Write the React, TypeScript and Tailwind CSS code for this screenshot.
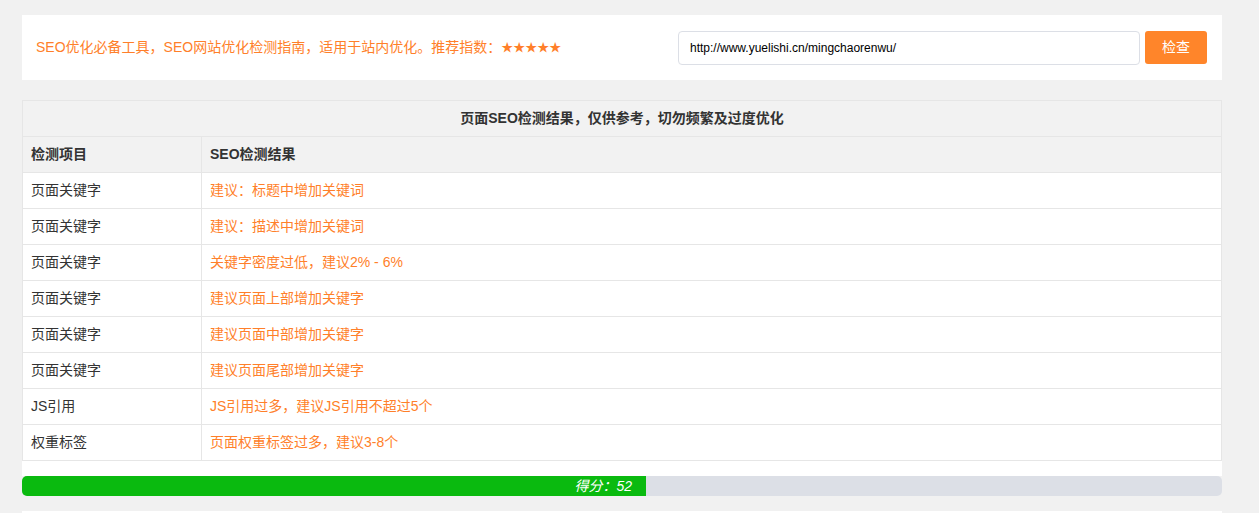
import React from "react";

const rows: [string, string][] = [
  ["页面关键字", "建议：标题中增加关键词"],
  ["页面关键字", "建议：描述中增加关键词"],
  ["页面关键字", "关键字密度过低，建议2% - 6%"],
  ["页面关键字", "建议页面上部增加关键字"],
  ["页面关键字", "建议页面中部增加关键字"],
  ["页面关键字", "建议页面尾部增加关键字"],
  ["JS引用", "JS引用过多，建议JS引用不超过5个"],
  ["权重标签", "页面权重标签过多，建议3-8个"],
];

const font = { fontFamily: '"Liberation Sans", "Noto Sans CJK SC", sans-serif' };

export default function App() {
  const score = 52;
  return (
    <div className="min-h-screen bg-[#f1f1f1] pt-[15px]" style={font}>
      <div className="ml-[22px] w-[1200px]">
        <div className="flex h-[65px] items-center justify-between bg-white pl-[14px] pr-[15px]">
          <div className="text-[14px] text-[#ff7f2a]">
            SEO优化必备工具，SEO网站优化检测指南，适用于站内优化。推荐指数：
            <span className="text-[12px]">★★★★★</span>
          </div>
          <div className="flex items-center gap-[5px]">
            <input
              className="h-[34px] w-[462px] rounded-[4px] border border-[#dcdfe6] bg-white px-[11px] text-[12px] text-black outline-none"
              defaultValue="http://www.yuelishi.cn/mingchaorenwu/"
            />
            <button className="h-[33px] w-[62px] rounded-[3px] bg-[#ff852a] text-[14px] text-white">
              检查
            </button>
          </div>
        </div>

        <div className="mt-[20px] bg-white pb-[15px]">
          <table className="w-full border-collapse text-[14px] text-[#333]">
            <thead>
              <tr className="h-[36px] bg-[#f2f2f2]">
                <th colSpan={2} className="border border-[#e6e6e6] text-center font-bold">
                  页面SEO检测结果，仅供参考，切勿频繁及过度优化
                </th>
              </tr>
              <tr className="h-[36px] bg-[#f2f2f2]">
                <th className="w-[179px] border border-[#e6e6e6] pl-[8px] text-left font-bold">检测项目</th>
                <th className="border border-[#e6e6e6] pl-[8px] text-left font-bold">SEO检测结果</th>
              </tr>
            </thead>
            <tbody>
              {rows.map(([a, b], i) => (
                <tr key={i} className="h-[36px]">
                  <td className="border border-[#e6e6e6] pl-[8px]">{a}</td>
                  <td className="border border-[#e6e6e6] pl-[8px] text-[#ff7f2a]">{b}</td>
                </tr>
              ))}
            </tbody>
          </table>
        </div>

        <div className="relative h-[20px] overflow-hidden rounded-[5px] bg-[#dcdfe6]">
          <div
            className="flex h-full items-center justify-end bg-[#0aba0f] pr-[14px] text-[14px] italic text-white"
            style={{ width: `${score}%` }}
          >
            得分：{score}
          </div>
        </div>

        <div className="mt-[15px] h-[40px] bg-white" />
      </div>
    </div>
  );
}
